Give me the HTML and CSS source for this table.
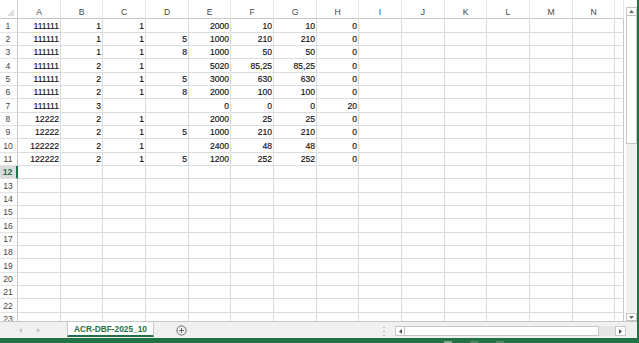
FILE: index.html
```html
<!DOCTYPE html>
<html lang="en">
<head>
<meta charset="utf-8">
<title>ACR-DBF-2025_10</title>
<link rel="stylesheet" href="styles.css">
</head>
<body>
<div class="app">
  <div class="main">
    <div class="sheet">
      <div class="corner"><svg width="8" height="8" viewBox="0 0 8 8"><path d="M7 0V7H0Z" fill="#dedede"/></svg></div>
      <div class="ch">A</div><div class="ch">B</div><div class="ch">C</div><div class="ch">D</div><div class="ch">E</div><div class="ch">F</div><div class="ch">G</div><div class="ch">H</div><div class="ch">I</div><div class="ch">J</div><div class="ch">K</div><div class="ch">L</div><div class="ch">M</div><div class="ch">N</div><div class="ch"></div>

      <div class="rh">1</div><div>111111</div><div>1</div><div>1</div><div></div><div>2000</div><div>10</div><div>10</div><div>0</div><div></div><div></div><div></div><div></div><div></div><div></div><div class="o"></div>
      <div class="rh">2</div><div>111111</div><div>1</div><div>1</div><div>5</div><div>1000</div><div>210</div><div>210</div><div>0</div><div></div><div></div><div></div><div></div><div></div><div></div><div class="o"></div>
      <div class="rh">3</div><div>111111</div><div>1</div><div>1</div><div>8</div><div>1000</div><div>50</div><div>50</div><div>0</div><div></div><div></div><div></div><div></div><div></div><div></div><div class="o"></div>
      <div class="rh">4</div><div>111111</div><div>2</div><div>1</div><div></div><div>5020</div><div>85,25</div><div>85,25</div><div>0</div><div></div><div></div><div></div><div></div><div></div><div></div><div class="o"></div>
      <div class="rh">5</div><div>111111</div><div>2</div><div>1</div><div>5</div><div>3000</div><div>630</div><div>630</div><div>0</div><div></div><div></div><div></div><div></div><div></div><div></div><div class="o"></div>
      <div class="rh">6</div><div>111111</div><div>2</div><div>1</div><div>8</div><div>2000</div><div>100</div><div>100</div><div>0</div><div></div><div></div><div></div><div></div><div></div><div></div><div class="o"></div>
      <div class="rh">7</div><div>111111</div><div>3</div><div></div><div></div><div>0</div><div>0</div><div>0</div><div>20</div><div></div><div></div><div></div><div></div><div></div><div></div><div class="o"></div>
      <div class="rh">8</div><div>12222</div><div>2</div><div>1</div><div></div><div>2000</div><div>25</div><div>25</div><div>0</div><div></div><div></div><div></div><div></div><div></div><div></div><div class="o"></div>
      <div class="rh">9</div><div>12222</div><div>2</div><div>1</div><div>5</div><div>1000</div><div>210</div><div>210</div><div>0</div><div></div><div></div><div></div><div></div><div></div><div></div><div class="o"></div>
      <div class="rh">10</div><div>122222</div><div>2</div><div>1</div><div></div><div>2400</div><div>48</div><div>48</div><div>0</div><div></div><div></div><div></div><div></div><div></div><div></div><div class="o"></div>
      <div class="rh">11</div><div>122222</div><div>2</div><div>1</div><div>5</div><div>1200</div><div>252</div><div>252</div><div>0</div><div></div><div></div><div></div><div></div><div></div><div></div><div class="o"></div>
      <div class="rh sel">12</div><div></div><div></div><div></div><div></div><div></div><div></div><div></div><div></div><div></div><div></div><div></div><div></div><div></div><div></div><div class="o"></div>
      <div class="rh">13</div><div></div><div></div><div></div><div></div><div></div><div></div><div></div><div></div><div></div><div></div><div></div><div></div><div></div><div></div><div class="o"></div>
      <div class="rh">14</div><div></div><div></div><div></div><div></div><div></div><div></div><div></div><div></div><div></div><div></div><div></div><div></div><div></div><div></div><div class="o"></div>
      <div class="rh">15</div><div></div><div></div><div></div><div></div><div></div><div></div><div></div><div></div><div></div><div></div><div></div><div></div><div></div><div></div><div class="o"></div>
      <div class="rh">16</div><div></div><div></div><div></div><div></div><div></div><div></div><div></div><div></div><div></div><div></div><div></div><div></div><div></div><div></div><div class="o"></div>
      <div class="rh">17</div><div></div><div></div><div></div><div></div><div></div><div></div><div></div><div></div><div></div><div></div><div></div><div></div><div></div><div></div><div class="o"></div>
      <div class="rh">18</div><div></div><div></div><div></div><div></div><div></div><div></div><div></div><div></div><div></div><div></div><div></div><div></div><div></div><div></div><div class="o"></div>
      <div class="rh">19</div><div></div><div></div><div></div><div></div><div></div><div></div><div></div><div></div><div></div><div></div><div></div><div></div><div></div><div></div><div class="o"></div>
      <div class="rh">20</div><div></div><div></div><div></div><div></div><div></div><div></div><div></div><div></div><div></div><div></div><div></div><div></div><div></div><div></div><div class="o"></div>
      <div class="rh">21</div><div></div><div></div><div></div><div></div><div></div><div></div><div></div><div></div><div></div><div></div><div></div><div></div><div></div><div></div><div class="o"></div>
      <div class="rh">22</div><div></div><div></div><div></div><div></div><div></div><div></div><div></div><div></div><div></div><div></div><div></div><div></div><div></div><div></div><div class="o"></div>
      <div class="rh">23</div><div></div><div></div><div></div><div></div><div></div><div></div><div></div><div></div><div></div><div></div><div></div><div></div><div></div><div></div><div class="o"></div>
    </div>
    <div class="vscroll">
      <div class="vbtn"><svg width="5" height="3" viewBox="0 0 5 3"><path d="M0 3L2.5 0L5 3Z" fill="#666"/></svg></div>
      <div class="vthumb"></div>
      <div class="vtrack"></div>
      <div class="vbtn down"><svg width="5" height="3" viewBox="0 0 5 3"><path d="M0 0L2.5 3L5 0Z" fill="#666"/></svg></div>
    </div>
  </div>
  <div class="tabbar">
    <div class="nav">
      <svg width="3" height="5" viewBox="0 0 3 5"><path d="M3 0L0 2.5L3 5Z" fill="#c2c2c2"/></svg>
      <svg width="3" height="5" viewBox="0 0 3 5"><path d="M0 0L3 2.5L0 5Z" fill="#c2c2c2"/></svg>
    </div>
    <div class="tab">ACR-DBF-2025_10</div>
    <div class="add"><svg width="11" height="11" viewBox="0 0 11 11"><circle cx="5.5" cy="5.5" r="4.6" fill="none" stroke="#6d6d6d" stroke-width="1"/><path d="M5.5 3V8M3 5.5H8" stroke="#6d6d6d" stroke-width="1"/></svg></div>
    <div class="right">
      <div class="dots"><svg width="2" height="9" viewBox="0 0 2 9"><rect x="0.5" y="0" width="1" height="1" fill="#8a8a8a"/><rect x="0.5" y="4" width="1" height="1" fill="#8a8a8a"/><rect x="0.5" y="8" width="1" height="1" fill="#8a8a8a"/></svg></div>
      <div class="hscroll">
        <div class="hbtn"><svg width="3" height="5" viewBox="0 0 3 5"><path d="M3 0L0 2.5L3 5Z" fill="#555"/></svg></div>
        <div class="hthumb"></div>
        <div class="htrack"></div>
        <div class="hbtn r"><svg width="3" height="5" viewBox="0 0 3 5"><path d="M0 0L3 2.5L0 5Z" fill="#555"/></svg></div>
      </div>
    </div>
  </div>
  <div class="status">
    <span class="mark on"></span><span class="mark"></span><span class="mark"></span>
  </div>
</div>
</body>
</html>
```
FILE: styles.css
```css
* { box-sizing: border-box; margin: 0; padding: 0; }
html, body { width: 639px; height: 343px; overflow: hidden; background: #fff; }
body { font-family: "Liberation Sans", Arial, sans-serif; }

.app {
  display: flex;
  flex-direction: column;
  width: 639px;
  height: 343px;
  border-right: 2px solid #217346;
}

.main { display: flex; height: 321px; }

.sheet {
  width: 624px;
  height: 321px;
  overflow: hidden;
  display: grid;
  grid-template-columns: 18px 43px 42px 43px 43px 42px 43px 43px 42px 43px 43px 42px 43px 43px 42px 9px;
  grid-template-rows: 19px repeat(7, 14px 13px 13px) 14px 13px;
  align-content: start;
}

.sheet > div {
  border-right: 1px solid #dadcdd;
  border-bottom: 1px solid #dadcdd;
  font-size: 8.6px;
  line-height: 11px;
  color: #111;
  -webkit-text-stroke: 0.15px #111;
  display: flex;
  align-items: flex-end;
  justify-content: flex-end;
  padding-right: 1px;
  white-space: nowrap;
  overflow: hidden;
}

.sheet > .o { border-right-color: #c8c8c8; }

.sheet > .corner {
  border-right-color: #d0d0d0;
  border-bottom-color: #c8c8c8;
  padding: 0 2px 1px 0;
}

.sheet > .ch {
  justify-content: center;
  padding-right: 0;
  color: #444;
  -webkit-text-stroke: 0;
  border-right-color: #e6e6e6;
  border-bottom-color: #c8c8c8;
}

.sheet > .rh {
  justify-content: center;
  padding-right: 1px;
  color: #444;
  -webkit-text-stroke: 0;
  border-right-color: #c8c8c8;
  border-bottom-color: #e3e3e3;
}

.sheet > .rh.sel {
  background: #dcdcdc;
  color: #217346;
  font-weight: bold;
  border-right: 2px solid #217346;
}

.vscroll {
  width: 13px;
  display: flex;
  flex-direction: column;
  padding: 7px 0 0 2px;
  background: #fff;
}
.vbtn {
  height: 9px;
  border: 1px solid #c6c6c6;
  background: #fff;
  display: flex;
  align-items: center;
  justify-content: center;
}
.vbtn.down { height: 8px; }
.vthumb {
  height: 128px;
  border: 1px solid #c6c6c6;
  border-top: none;
  background: #fff;
}
.vtrack { flex: 1; background: #f0f0f0; }

.tabbar {
  height: 17px;
  border-top: 1px solid #c6c6c6;
  background: #f0f0f0;
  display: flex;
  align-items: flex-start;
}

.nav {
  width: 67px;
  height: 16px;
  display: flex;
  align-items: center;
  gap: 15px;
  padding-left: 19px;
}

.tab {
  width: 87px;
  height: 15px;
  background: #fff;
  border-left: 1px solid #c6c6c6;
  border-right: 1px solid #c6c6c6;
  border-bottom: 2px solid #217346;
  color: #217346;
  font-weight: bold;
  font-size: 8.3px;
  line-height: 13px;
  padding-top: 1px;
  text-align: center;
  white-space: nowrap;
}

.add {
  margin-left: 22px;
  height: 16px;
  display: flex;
  align-items: center;
}

.right {
  margin-left: auto;
  margin-right: 11px;
  display: flex;
  align-items: flex-start;
}

.dots { margin: 5px 10px 0 0; height: 9px; display: flex; }

.hscroll {
  display: flex;
  width: 231px;
  height: 10px;
  margin-top: 4px;
}
.hbtn {
  width: 10px;
  border: 1px solid #c6c6c6;
  background: #fff;
  display: flex;
  align-items: center;
  justify-content: center;
}
.hbtn.r { width: 11px; }
.hthumb {
  width: 194px;
  border: 1px solid #c6c6c6;
  border-left: none;
  background: #fff;
}
.htrack { flex: 1; background: #e6e6e6; }

.status {
  height: 5px;
  background: #217346;
  margin-right: -2px;
  display: flex;
  align-items: flex-end;
  gap: 18px;
  padding-left: 444px;
}
.mark { width: 8px; height: 2px; background: #4e8c69; }
.mark.on { background: #7fae93; }
```
